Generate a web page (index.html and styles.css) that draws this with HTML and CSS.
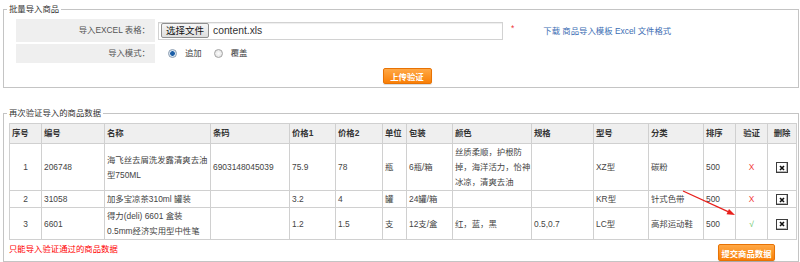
FILE: index.html
```html
<!DOCTYPE html>
<html lang="zh-CN">
<head>
    <meta charset="UTF-8">
    <meta name="viewport" content="width=device-width, initial-scale=1.0">
    <title>批量导入商品</title>
    <link rel="stylesheet" href="styles.css">
</head>
<body>

    <fieldset class="box">
        <legend>批量导入商品</legend>
        <div class="form">
            <div class="form-row row-file">
                <div class="label">导入EXCEL 表格：</div>
                <div class="value">
                    <div class="file-box"><span class="file-btn">选择文件</span><span class="file-name">content.xls</span></div>
                    <span class="required">*</span>
                    <a class="tpl-link" href="#">下载 商品导入模板 Excel 文件格式</a>
                </div>
            </div>
            <div class="form-row row-mode">
                <div class="label">导入模式：</div>
                <div class="value">
                    <label class="radio"><span class="dot checked"></span>追加</label>
                    <label class="radio"><span class="dot"></span>覆盖</label>
                </div>
            </div>
            <div class="actions"><button class="btn btn-upload">上传验证</button></div>
        </div>
    </fieldset>

    <fieldset class="box box-check">
        <legend>再次验证导入的商品数据</legend>
        <div class="grid-wrap">
            <table class="grid">
                <colgroup>
                    <col class="c-idx"><col class="c-code"><col class="c-name"><col class="c-bar">
                    <col class="c-p1"><col class="c-p2"><col class="c-unit"><col class="c-pack">
                    <col class="c-color"><col class="c-spec"><col class="c-model"><col class="c-cat">
                    <col class="c-sort"><col class="c-ok"><col class="c-del">
                </colgroup>
                <thead>
                    <tr>
                        <th>序号</th><th>编号</th><th>名称</th><th>条码</th><th>价格1</th><th>价格2</th><th>单位</th><th>包装</th>
                        <th>颜色</th><th>规格</th><th>型号</th><th>分类</th><th>排序</th><th class="center">验证</th><th class="center">删除</th>
                    </tr>
                </thead>
                <tbody>
                    <tr>
                        <td class="center">1</td><td>206748</td><td>海飞丝去屑洗发露清爽去油型750ML</td><td>6903148045039</td>
                        <td>75.9</td><td>78</td><td>瓶</td><td>6瓶/箱</td><td>丝质柔顺，护根防掉，海洋活力，怡神冰凉，清爽去油</td>
                        <td></td><td>XZ型</td><td>碳粉</td><td>500</td>
                        <td class="center"><span class="bad">X</span></td>
                        <td class="center"><span class="del"><svg width="6" height="6" viewBox="0 0 6 6"><path d="M1 1L5 5M5 1L1 5" stroke="#111" stroke-width="1.6"/></svg></span></td>
                    </tr>
                    <tr>
                        <td class="center">2</td><td>31058</td><td>加多宝凉茶310ml 罐装</td><td></td>
                        <td>3.2</td><td>4</td><td>罐</td><td>24罐/箱</td><td></td>
                        <td></td><td>KR型</td><td>针式色带</td><td>500</td>
                        <td class="center"><span class="bad">X</span></td>
                        <td class="center"><span class="del"><svg width="6" height="6" viewBox="0 0 6 6"><path d="M1 1L5 5M5 1L1 5" stroke="#111" stroke-width="1.6"/></svg></span></td>
                    </tr>
                    <tr>
                        <td class="center">3</td><td>6601</td><td>得力(deli) 6601 盒装 0.5mm经济实用型中性笔</td><td></td>
                        <td>1.2</td><td>1.5</td><td>支</td><td>12支/盒</td><td>红，蓝，黑</td>
                        <td>0.5,0.7</td><td>LC型</td><td>高邦运动鞋</td><td>500</td>
                        <td class="center"><span class="good">√</span></td>
                        <td class="center"><span class="del"><svg width="6" height="6" viewBox="0 0 6 6"><path d="M1 1L5 5M5 1L1 5" stroke="#111" stroke-width="1.6"/></svg></span></td>
                    </tr>
                </tbody>
            </table>

            <!-- annotation arrow -->
            <svg class="arrow" width="60" height="34" viewBox="0 0 60 34">
                <line x1="4" y1="5" x2="49" y2="25.7" stroke="#e8201c" stroke-width="1.3"/>
                <polygon points="56,29 47.5,28.3 50,22.9" fill="#e8201c"/>
            </svg>

            <div class="grid-foot">
                <span class="hint">只能导入验证通过的商品数据</span>
                <button class="btn btn-submit">提交商品数据</button>
            </div>
        </div>
    </fieldset>

</body>
</html>
```

FILE: styles.css
```css
body { margin: 0; padding: 2px 1px 0 3px; font-family: "Liberation Sans", "Noto Sans CJK SC", sans-serif; font-size: 8.4px; line-height: 15px; color: #333; background: #fff; }

.box { margin: 0; padding: 0; border: 1px solid #c4c4c4; min-width: 0; }
.box legend { margin-left: 3px; padding: 0 2px; color: #333; }
.box-check { margin-top: 18px; }

/* upload form */
.form { padding: 2px 0 3px 12px; }
.form-row { display: flex; align-items: center; }
.row-file { height: 23px; }
.row-mode { height: 19px; margin-top: 2px; }
.form-row .label { width: 139px; height: 100%; box-sizing: border-box; padding-right: 5px; background: #efefef; color: #555; display: flex; align-items: center; justify-content: flex-end; }
.form-row .value { display: flex; align-items: center; padding-left: 3px; }

.file-box { width: 345px; height: 18px; box-sizing: border-box; border: 1px solid #d2d2d2; box-shadow: inset 0 1px 1px #eee; display: flex; align-items: center; padding-left: 2px; font-size: 10.3px; color: #333; }
.file-btn { height: 15px; line-height: 14px; box-sizing: border-box; padding: 0 4px; border: 1px solid #8f8f8f; border-radius: 2px; background: linear-gradient(#f6f6f6, #dedede); margin-right: 4px; font-size: 9.5px; color: #111; }
.required { color: #e33; margin-left: 8px; margin-top: -4px; }
.tpl-link { color: #3b6db3; text-decoration: none; margin-left: 29px; margin-top: 1px; }

.radio { display: flex; align-items: center; color: #444; margin-left: 10px; }
.radio + .radio { margin-left: 12px; }
.dot { width: 9px; height: 9px; box-sizing: border-box; border-radius: 50%; border: 1px solid #a3a3a3; background: radial-gradient(circle, #fdfdfd, #dcdcdc); margin-right: 8px; }
.dot.checked { border-color: #8a9cb0; background: radial-gradient(circle, #1c5ea6 0, #1c5ea6 2px, #cddff0 2.6px, #eef4fa 4px); }

.actions { display: flex; justify-content: center; margin-top: 5px; }
.btn { font-family: inherit; font-size: 8.4px; font-weight: bold; color: #fff; border: 1px solid #e77204; border-radius: 2px; background: linear-gradient(#ffa846, #f97f06); box-shadow: 0 1px 1px rgba(0,0,0,0.15); cursor: pointer; margin: 0; }
.btn-upload { width: 49px; height: 16px; padding: 0; }
.btn-submit { width: 57px; height: 17px; padding: 0; }

/* check table */
.grid-wrap { position: relative; padding: 2px 0 0 5px; }
.grid { width: 787px; border-collapse: collapse; table-layout: fixed; }
.grid th, .grid td { border: 1px solid #d0d0d0; text-align: left; vertical-align: middle; }
.grid th { background: #efefef; font-weight: bold; color: #333; padding: 2px 0 2px 2px; }
.grid td { padding: 1px 0 0 2px; color: #444; }
.grid .center { text-align: center; padding-left: 0; }
.c-idx { width: 32px; }
.c-code { width: 63px; }
.c-name { width: 106px; }
.c-bar { width: 79px; }
.c-p1 { width: 46px; }
.c-p2 { width: 47px; }
.c-unit { width: 24px; }
.c-pack { width: 46px; }
.c-color { width: 79px; }
.c-spec { width: 62px; }
.c-model { width: 55px; }
.c-cat { width: 55px; }
.c-sort { width: 32px; }
.c-ok { width: 32px; }
.c-del { width: 29px; }

.bad { color: #f23a3a; }
.good { color: #5cc15c; }
.del { display: inline-flex; align-items: center; justify-content: center; width: 12px; height: 11px; box-sizing: border-box; border: 1px solid #3c3c3c; background: #fff; box-shadow: inset -1px -1px 0 #b8b8b8; vertical-align: middle; }

.arrow { position: absolute; left: 675px; top: 65px; }

.grid-foot { width: 787px; box-sizing: border-box; display: flex; justify-content: space-between; align-items: flex-start; padding: 2px 21px 0 0; }
.hint { color: #f00; }
.btn-submit { margin-top: 2px; }
```
